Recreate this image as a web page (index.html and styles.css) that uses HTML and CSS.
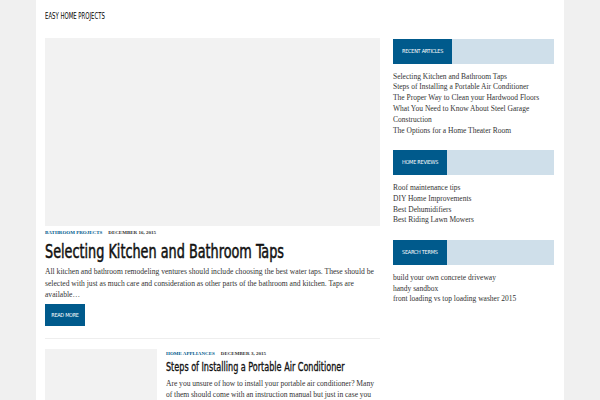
FILE: index.html
```html
<!DOCTYPE html>
<html>
<head>
<meta charset="utf-8">
<link rel="stylesheet" href="styles.css">
</head>
<body>
<div class="wrap">
  <header class="site-header"><span class="cond logo">EASY HOME PROJECTS</span></header>
  <div class="layout">
    <main class="main">
      <article class="featured">
        <div class="feat-img"></div>
        <div class="meta"><span class="cat">BATHROOM PROJECTS</span><span class="date">DECEMBER 16, 2015</span></div>
        <h1 class="feat-title"><span class="cond t1">Selecting Kitchen and Bathroom Taps</span></h1>
        <p class="excerpt">All kitchen and bathroom remodeling ventures should include choosing the best water taps. These should be selected with just as much care and consideration as other parts of the bathroom and kitchen. Taps are available…</p>
        <a class="btn">READ MORE</a>
      </article>
      <article class="post">
        <div class="thumb"></div>
        <div class="post-body">
          <div class="meta"><span class="cat">HOME APPLIANCES</span><span class="date">DECEMBER 3, 2015</span></div>
          <h2 class="post-title"><span class="cond t2">Steps of Installing a Portable Air Conditioner</span></h2>
          <p class="excerpt">Are you unsure of how to install your portable air conditioner? Many of them should come with an instruction manual but just in case you</p>
        </div>
      </article>
    </main>
    <aside class="sidebar">
      <section class="widget">
        <div class="w-head"><span>RECENT ARTICLES</span></div>
        <ul class="w-list">
          <li>Selecting Kitchen and Bathroom Taps</li>
          <li>Steps of Installing a Portable Air Conditioner</li>
          <li>The Proper Way to Clean your Hardwood Floors</li>
          <li>What You Need to Know About Steel Garage Construction</li>
          <li>The Options for a Home Theater Room</li>
        </ul>
      </section>
      <section class="widget">
        <div class="w-head"><span>HOME REVIEWS</span></div>
        <ul class="w-list">
          <li>Roof maintenance tips</li>
          <li>DIY Home Improvements</li>
          <li>Best Dehumidifiers</li>
          <li>Best Riding Lawn Mowers</li>
        </ul>
      </section>
      <section class="widget">
        <div class="w-head"><span>SEARCH TERMS</span></div>
        <ul class="w-list">
          <li>build your own concrete driveway</li>
          <li>handy sandbox</li>
          <li>front loading vs top loading washer 2015</li>
        </ul>
      </section>
    </aside>
  </div>
</div>
</body>
</html>
```

FILE: styles.css
```css
html, body { margin: 0; padding: 0; }
body {
  background: #f0f0f0;
  font-family: "Liberation Serif", serif;
  color: #333;
  height: 400px;
  overflow: hidden;
}
.wrap {
  width: 509px;
  margin-left: 36px;
  padding: 0 10px 0 9px;
  background: #fff;
  min-height: 400px;
}
.cond {
  display: inline-block;
  white-space: nowrap;
  transform-origin: 0 50%;
  font-family: "DejaVu Sans Condensed", sans-serif;
}
.site-header {
  height: 38px;
  line-height: 27px;
  color: #000;
}
.logo { font-size: 8.5px; transform: scaleX(0.7); }
.layout { display: flex; gap: 13px; }
.main { width: 335px; flex: none; min-width: 0; }
.sidebar { width: 161px; flex: none; padding-top: 1px; }
.feat-img { height: 188px; background: #f2f2f2; }
.meta {
  font-size: 5px;
  font-weight: bold;
  line-height: 8px;
  margin-top: 3px;
}
.cat { color: #005a8c; margin-right: 6px; }
.date { color: #333; }
.feat-title {
  font-weight: normal;
  font-size: 19px;
  line-height: 24px;
  margin: 2px 0 2px;
  color: #111;
}
.t1 { transform: scaleX(0.75); -webkit-text-stroke: 0.5px #111; }
.excerpt {
  font-size: 7.6px;
  line-height: 11.5px;
  margin: 0;
  color: #333;
}
.btn {
  display: block;
  margin-top: 3px;
  background: #005a8c;
  color: #fff;
  font-family: "DejaVu Sans Condensed", sans-serif;
  font-size: 5.5px;
  letter-spacing: -0.3px;
  width: 40px;
  height: 22px;
  line-height: 22px;
  text-align: center;
}
.featured { padding-bottom: 12px; border-bottom: 1px solid #eee; }
.post { display: flex; gap: 9px; margin-top: 10px; }
.thumb { width: 112px; height: 80px; background: #f2f2f2; flex: none; }
.post-body { width: 214px; min-width: 0; flex: none; }
.post .meta { margin-top: 1px; }
.post .excerpt { font-size: 7.6px; word-spacing: -0.2px; }
.post-title {
  font-weight: normal;
  font-size: 13px;
  line-height: 16px;
  margin: 1px 0 3px;
  color: #111;
}
.t2 { transform: scaleX(0.69); -webkit-text-stroke: 0.35px #111; }
.widget { margin-bottom: 14px; }
.w-head {
  height: 25px;
  background: #cfdfea;
  display: flex;
}
.w-head span {
  background: #005a8c;
  color: #fff;
  font-family: "DejaVu Sans Condensed", sans-serif;
  font-size: 5.5px;
  letter-spacing: -0.25px;
  line-height: 25px;
  padding: 0 9px;
}
.w-list {
  list-style: none;
  margin: 0;
  padding: 7.6px 0 0;
  font-size: 7.5px;
  line-height: 10.8px;
  color: #333;
}
```
